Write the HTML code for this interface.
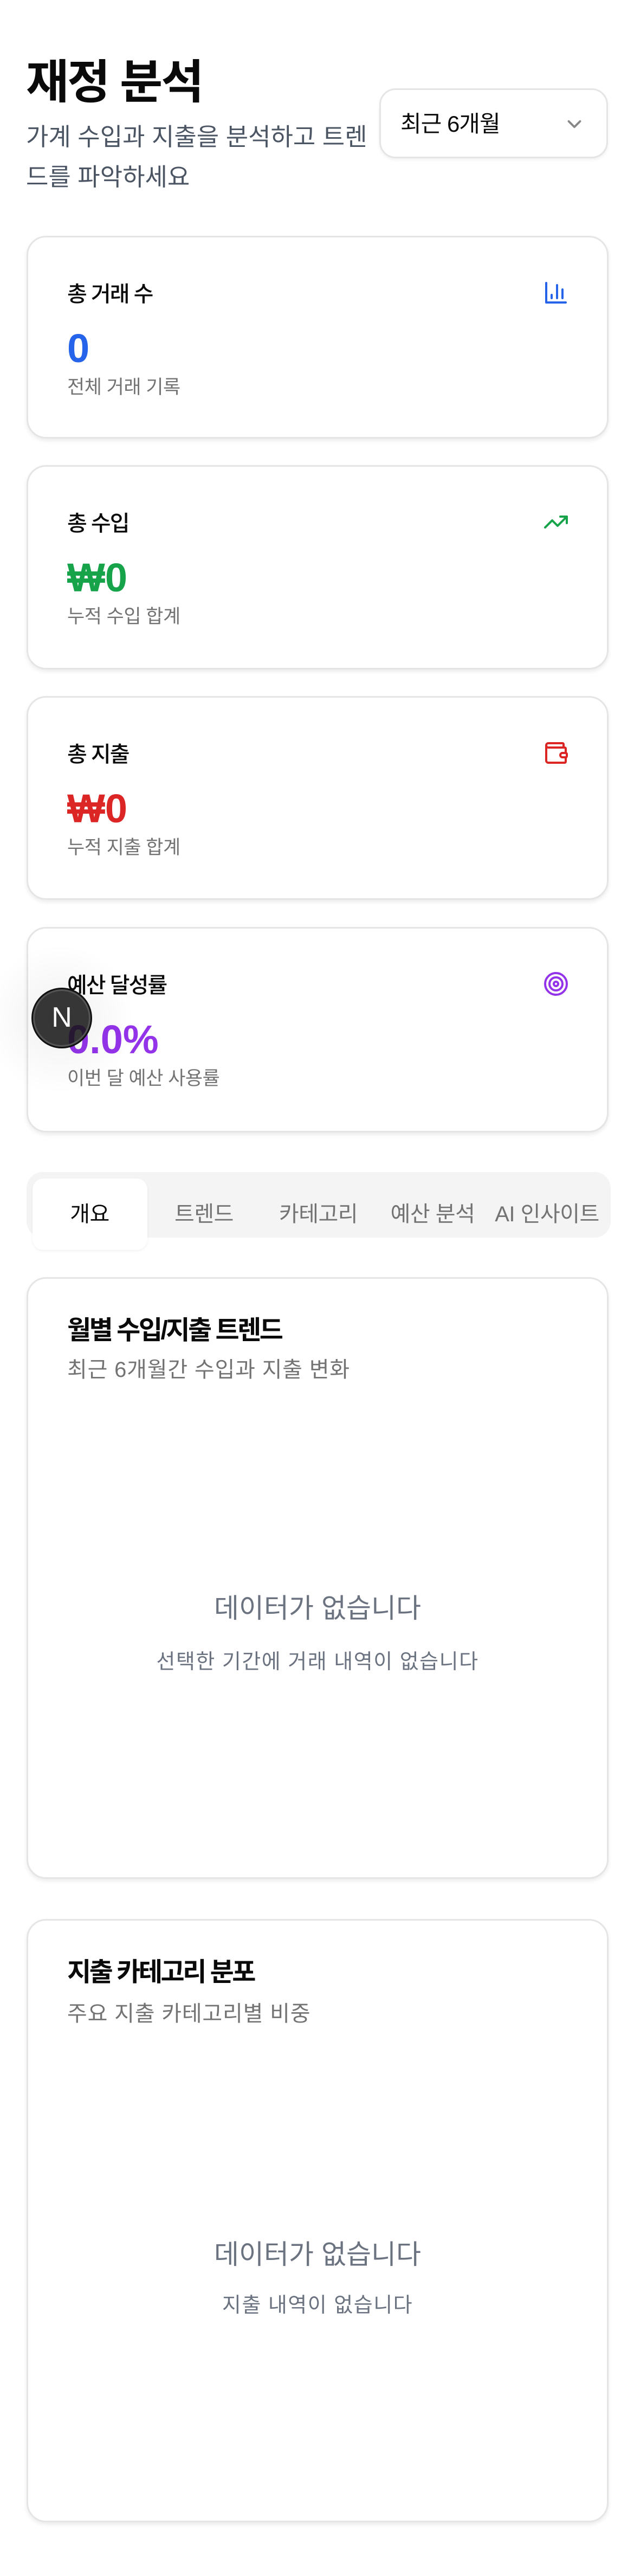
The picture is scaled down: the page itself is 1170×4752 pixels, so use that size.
<!DOCTYPE html>
<html lang="ko"><head><meta charset="utf-8">
<style>
*{margin:0;padding:0;box-sizing:border-box}
html,body{width:1170px;height:4752px;background:#fff;overflow:hidden}
body{position:relative;font-family:"Liberation Sans","Noto Sans CJK KR",sans-serif;color:#0a0a0a}
.a{position:absolute;white-space:nowrap}
.card{position:absolute;left:49px;width:1074px;background:#fff;border:3px solid #e5e5e5;border-radius:36px;box-shadow:0 4px 8px rgba(0,0,0,0.08)}
.lbl{position:absolute;left:72px;font-size:40px;font-weight:500;letter-spacing:-2px;line-height:50px}
.val{position:absolute;left:72px;font-size:74px;font-weight:700;line-height:90px}
.sub{position:absolute;left:72px;font-size:35px;color:#737373;letter-spacing:-0.5px;line-height:44px}
.ic{position:absolute;left:950px;width:48px;height:48px}
.ct{position:absolute;left:72px;font-size:48px;font-weight:700;letter-spacing:-3.5px;line-height:60px}
.cs{position:absolute;left:72px;font-size:40px;color:#737373;letter-spacing:0.8px;line-height:50px}
.et{position:absolute;left:0;width:100%;text-align:center;font-size:50px;color:#6b7280;letter-spacing:0;line-height:60px}
.es{position:absolute;left:0;width:100%;text-align:center;font-size:38px;color:#6b7280;letter-spacing:1.5px;line-height:48px}
.tab{position:absolute;top:2213px;width:211px;text-align:center;font-size:40px;color:#737373;letter-spacing:-0.5px;line-height:54px}
</style></head><body>

<div class="a" style="left:48px;top:100px;font-size:86px;font-weight:700;letter-spacing:-3px;line-height:104px">재정 분석</div>
<div class="a" style="left:48px;top:216px;font-size:45px;color:#4b5563;letter-spacing:0;line-height:74px">가계 수입과 지출을 분석하고 트렌<br>드를 파악하세요</div>

<div class="a" style="left:700px;top:163px;width:422px;height:129px;border:3px solid #e5e5e5;border-radius:30px;box-shadow:0 3px 6px rgba(0,0,0,0.06);background:#fff">
  <div class="a" style="left:36px;top:38px;font-size:42px;letter-spacing:-1px;line-height:50px">최근 6개월</div>
  <svg class="a" style="left:336px;top:42px" width="42" height="42" viewBox="0 0 24 24" fill="none" stroke="#888" stroke-width="2.2" stroke-linecap="round" stroke-linejoin="round"><path d="m6 9 6 6 6-6"/></svg>
</div>

<div class="card" style="top:435px;height:374px">
  <div class="lbl" style="top:80px">총 거래 수</div>
  <svg class="ic" style="top:78px" viewBox="0 0 24 24" fill="none" stroke="#2563eb" stroke-width="2" stroke-linecap="round" stroke-linejoin="round"><path d="M3 3v18h18"/><path d="M18 17V9"/><path d="M13 17V5"/><path d="M8 17v-3"/></svg>
  <div class="val" style="top:160px;color:#2563eb">0</div>
  <div class="sub" style="top:255px">전체 거래 기록</div>
</div>

<div class="card" style="top:858px;height:377px">
  <div class="lbl" style="top:80px">총 수입</div>
  <svg class="ic" style="top:78px" viewBox="0 0 24 24" fill="none" stroke="#16a34a" stroke-width="2" stroke-linecap="round" stroke-linejoin="round"><polyline points="22 7 13.5 15.5 8.5 10.5 2 17"/><polyline points="16 7 22 7 22 13"/></svg>
  <div class="val" style="top:160px;color:#16a34a">₩0</div>
  <div class="sub" style="top:255px">누적 수입 합계</div>
</div>

<div class="card" style="top:1284px;height:376px">
  <div class="lbl" style="top:80px">총 지출</div>
  <svg class="ic" style="top:78px" viewBox="0 0 24 24" fill="none" stroke="#dc2626" stroke-width="2" stroke-linecap="round" stroke-linejoin="round"><path d="M19 7V4a1 1 0 0 0-1-1H5a2 2 0 0 0 0 4h15a1 1 0 0 1 1 1v4h-3a2 2 0 0 0 0 4h3a1 1 0 0 0 1-1v-2a1 1 0 0 0-1-1"/><path d="M3 5v14a2 2 0 0 0 2 2h15a1 1 0 0 0 1-1v-4"/></svg>
  <div class="val" style="top:160px;color:#dc2626">₩0</div>
  <div class="sub" style="top:255px">누적 지출 합계</div>
</div>

<div class="card" style="top:1710px;height:379px">
  <div class="lbl" style="top:80px">예산 달성률</div>
  <svg class="ic" style="top:78px" viewBox="0 0 24 24" fill="none" stroke="#9333ea" stroke-width="2" stroke-linecap="round" stroke-linejoin="round"><circle cx="12" cy="12" r="10"/><circle cx="12" cy="12" r="6"/><circle cx="12" cy="12" r="2"/></svg>
  <div class="val" style="top:160px;color:#9333ea">0.0%</div>
  <div class="sub" style="top:255px">이번 달 예산 사용률</div>
</div>

<div class="a" style="left:-40px;top:1730px;width:300px;height:300px;border-radius:50%;background:radial-gradient(circle,rgba(0,0,0,0.06),rgba(0,0,0,0) 65%)"></div>
<div class="a" style="left:58px;top:1822px;width:112px;height:112px;border-radius:50%;background:rgba(20,20,20,0.85);border:3px solid #111;box-shadow:inset 0 0 0 3px #555;color:#fff;font-size:52px;text-align:center;line-height:104px">N</div>

<div class="a" style="left:49px;top:2162px;width:1078px;height:121px;background:#f4f4f5;border-radius:30px"></div>
<div class="a" style="left:60px;top:2174px;width:212px;height:132px;background:#fff;border-radius:20px;box-shadow:0 2px 5px rgba(0,0,0,0.06)"></div>
<div class="tab" style="left:60px;color:#0a0a0a">개요</div>
<div class="tab" style="left:271px">트렌드</div>
<div class="tab" style="left:482px">카테고리</div>
<div class="tab" style="left:693px">예산 분석</div>
<div class="tab" style="left:904px">AI 인사이트</div>

<div class="card" style="top:2356px;height:1110px">
  <div class="ct" style="top:66px">월별 수입/지출 트렌드</div>
  <div class="cs" style="top:143px">최근 6개월간 수입과 지출 변화</div>
  <div class="et" style="top:578px">데이터가 없습니다</div>
  <div class="es" style="top:683px">선택한 기간에 거래 내역이 없습니다</div>
</div>

<div class="card" style="top:3540px;height:1113px">
  <div class="ct" style="top:66px">지출 카테고리 분포</div>
  <div class="cs" style="top:147px">주요 지출 카테고리별 비중</div>
  <div class="et" style="top:586px">데이터가 없습니다</div>
  <div class="es" style="top:686px">지출 내역이 없습니다</div>
</div>

</body></html>
